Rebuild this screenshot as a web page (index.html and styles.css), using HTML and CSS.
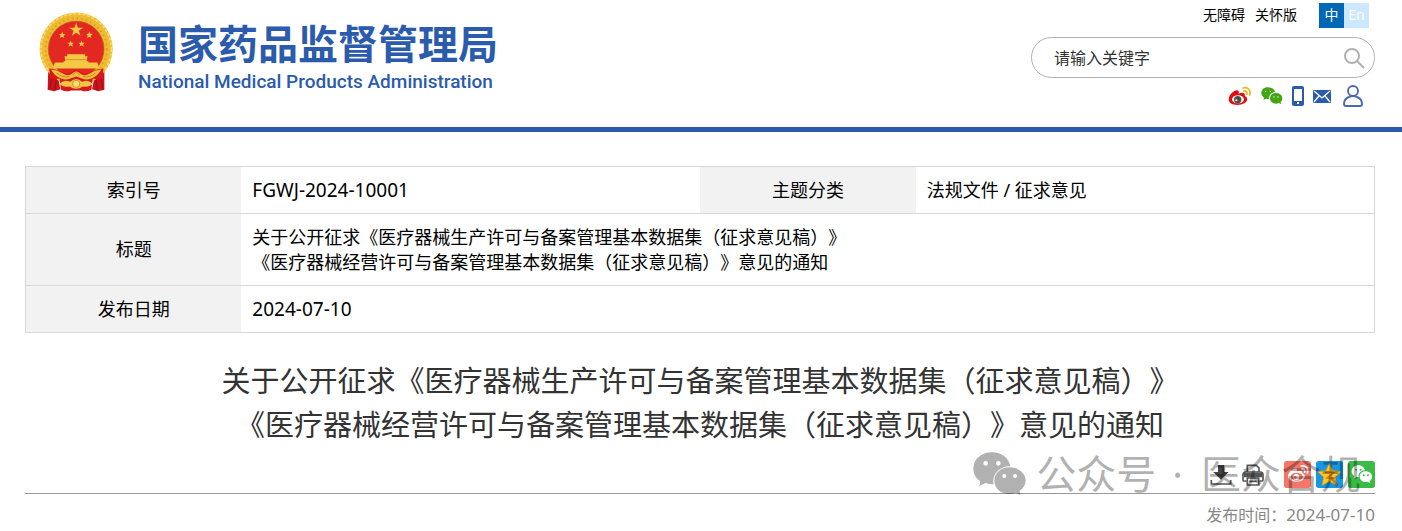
FILE: index.html
```html
<!DOCTYPE html>
<html lang="zh-CN">
<head>
    <meta charset="UTF-8">
    <meta name="viewport" content="width=device-width, initial-scale=1.0">
    <title>国家药品监督管理局</title>
    <link rel="stylesheet" href="styles.css">
</head>
<body>
    <header class="header">
        <a href="#" class="logo">
            <svg class="emblem" viewBox="28 36 226 240" aria-hidden="true">
                <path d="M56 206 L84 222 L92 268 L74 274 L54 270 Z M225 206 L197 222 L188 268 L206 274 L225 270 Z" fill="#c8141b"/>
                <circle cx="140" cy="147" r="110" fill="#eebb32"/>
                <circle cx="140" cy="147" r="106" fill="none" stroke="#f9dc6a" stroke-width="5" stroke-dasharray="9 5"/>
                <circle cx="140" cy="147" r="92" fill="none" stroke="#dfa021" stroke-width="6" stroke-dasharray="5 9"/>
                <circle cx="140" cy="147" r="84" fill="#e32822" stroke="#b9611c" stroke-width="2"/>
                <g fill="#f3c944">
                    <path d="M140 67 L145 83 L161 83 L148 92 L153 107 L140 98 L127 107 L132 92 L119 83 L135 83 Z"/>
                    <path d="M98 95 L101 102 L108 103 L102 107 L104 114 L97 110 L91 114 L93 107 L88 102 L95 102 Z"/>
                    <path d="M180 94 L183 101 L190 102 L184 107 L186 114 L180 110 L173 114 L175 107 L170 102 L177 101 Z"/>
                    <path d="M123 121 L126 128 L133 128 L128 133 L130 140 L123 136 L117 140 L119 133 L114 128 L121 128 Z"/>
                    <path d="M156 121 L159 128 L166 128 L161 133 L163 140 L156 136 L150 140 L152 133 L147 128 L154 128 Z"/>
                    <path d="M112 163 H168 L166 169 H174 L172 184 H177 V188 H204 L210 206 H70 L76 188 H102 V184 H107 L105 169 H114 Z"/>
                </g>
                <path d="M107 179 H172" stroke="#d8702a" stroke-width="2"/>
                <path d="M59 206 Q78 207 96 216 Q118 228 126 217 Q140 203 154 217 Q162 228 184 216 Q202 207 222 206 L221 236 Q206 240 190 236 L186 270 Q168 278 156 272 H124 Q112 278 94 270 L90 236 Q74 240 60 236 Z" fill="#d7191d"/>
                <path d="M64 209 Q82 210 98 220 Q116 231 128 221 Q140 208 152 221 Q164 231 182 220 Q198 210 216 209 Q206 228 186 236 Q170 242 158 236 L140 230 L122 236 Q110 242 94 236 Q74 228 64 209 Z" fill="#f0c03b"/>
                <path d="M82 219 Q98 235 120 230 M198 219 Q182 235 160 230 M129 226 L140 215 L151 226" fill="none" stroke="#c98522" stroke-width="3"/>
                <path d="M90 252 Q104 237 122 246 Q140 228 158 246 Q176 237 190 252 Q180 263 160 260 Q140 274 120 260 Q100 263 90 252 Z" fill="#f2c640"/>
                <circle cx="140" cy="252" r="11" fill="#f9de72" stroke="#d0902a" stroke-width="3"/>
                <path d="M66 238 Q62 254 60 269 M80 238 Q78 256 76 270 M214 238 Q219 254 220 269 M200 238 Q202 256 204 270" fill="none" stroke="#a80e14" stroke-width="4"/>
            </svg>
            <span class="logo-text">
                <span class="logo-cn">国家药品监督管理局</span>
                <span class="logo-en">National Medical Products Administration</span>
            </span>
        </a>

        <div class="header-tools">
            <nav class="top-links">
                <a href="#">无障碍</a>
                <a href="#">关怀版</a>
                <div class="lang">
                    <a href="#" class="lang-item active">中</a>
                    <a href="#" class="lang-item">En</a>
                </div>
            </nav>

            <form class="search">
                <input type="text" class="search-input" placeholder="请输入关键字" aria-label="请输入关键字">
                <button type="button" class="search-btn" aria-label="搜索">
                    <svg width="22" height="22" viewBox="0 0 22 22" fill="none" stroke="#b0b0b0" stroke-width="2">
                        <circle cx="9" cy="9" r="7"/>
                        <path d="M14 14 L21 21"/>
                    </svg>
                </button>
            </form>

            <div class="social">
                <a href="#" aria-label="微博">
                    <svg width="24" height="20" viewBox="0 0 72 60">
                        <path d="M2 40 C2 26 22 9 30 14 C35 17 31 22 32 23 C42 18 53 19 50 30 C60 33 60 45 50 51 C34 61 2 59 2 40 Z" fill="#e10b10"/>
                        <ellipse cx="30" cy="40" rx="18" ry="12" fill="#fff"/>
                        <circle cx="29" cy="41" r="11" fill="#4d4d4d"/>
                        <circle cx="25" cy="43" r="3" fill="#fff"/>
                        <path d="M45 6 C60 2 70 13 65 27 M47 15 C54 13 59 18 57 25" fill="none" stroke="#efb31c" stroke-width="5" stroke-linecap="round"/>
                    </svg>
                </a>
                <a href="#" aria-label="微信">
                    <svg width="22" height="18" viewBox="0 0 66 54">
                        <path d="M20 1 C8 1 1 9 1 18 C1 25 5 29 9 32 L7 39 L15 35 Q19 36 24 36 C23 24 32 16 42 15 C40 6 31 1 20 1 Z" fill="#43a615"/>
                        <path d="M45 18 C34 18 27 25 27 34 C27 43 35 50 45 50 Q50 50 54 48 L60 52 L59 45 C62 42 64 39 64 34 C64 25 56 18 45 18 Z" fill="#43a615"/>
                        <g fill="#fff"><circle cx="14" cy="13" r="2"/><circle cx="28" cy="13" r="2"/><circle cx="39" cy="30" r="2"/><circle cx="51" cy="30" r="2"/></g>
                    </svg>
                </a>
                <a href="#" aria-label="移动端">
                    <svg width="12" height="20" viewBox="0 0 12 20">
                        <rect width="12" height="20" rx="2" fill="#2b5bac"/>
                        <rect x="2" y="3" width="8" height="12" fill="#fff"/>
                        <rect x="5" y="16" width="2" height="2" fill="#fff"/>
                    </svg>
                </a>
                <a href="#" aria-label="邮箱">
                    <svg width="18" height="13" viewBox="0 0 18 13">
                        <rect width="18" height="13" rx="1" fill="#2b5bac"/>
                        <path d="M1 1 L9 8 L17 1 M1 12 L6 6 M17 12 L12 6" fill="none" stroke="#fff" stroke-width="1.3"/>
                    </svg>
                </a>
                <a href="#" class="user" aria-label="用户">
                    <svg width="20" height="22" viewBox="0 0 20 22" fill="none" stroke="#4c68b0" stroke-width="1.9">
                        <circle cx="10" cy="6" r="5"/>
                        <path d="M6 12 C3 13 1 15 1 19 Q1 21 3 21 H17 Q19 21 19 19 C19 15 17 13 14 12 Q10 10 6 12 Z"/>
                    </svg>
                </a>
            </div>
        </div>
    </header>

    <main class="content">
        <table class="info">
            <tr>
                <th scope="row">索引号</th>
                <td class="num">FGWJ-2024-10001</td>
                <th scope="row">主题分类</th>
                <td>法规文件 / 征求意见</td>
            </tr>
            <tr>
                <th scope="row">标题</th>
                <td colspan="3">关于公开征求《医疗器械生产许可与备案管理基本数据集（征求意见稿）》<br>《医疗器械经营许可与备案管理基本数据集（征求意见稿）》意见的通知</td>
            </tr>
            <tr>
                <th scope="row">发布日期</th>
                <td colspan="3" class="num">2024-07-10</td>
            </tr>
        </table>

        <h1 class="title">关于公开征求《医疗器械生产许可与备案管理基本数据集（征求意见稿）》<br>《医疗器械经营许可与备案管理基本数据集（征求意见稿）》意见的通知</h1>

        <div class="share">
            <button type="button" class="share-btn" aria-label="下载">
                <svg width="22" height="22" viewBox="0 0 66 66">
                    <path d="M24 3 H43 V24 H56 L33 47 L10 24 H24 Z" fill="#444"/>
                    <path d="M4 48 V60 H62 V48" fill="none" stroke="#555" stroke-width="5"/>
                </svg>
            </button>
            <button type="button" class="share-btn" aria-label="打印">
                <svg width="22" height="22" viewBox="0 0 66 66" fill="none" stroke="#555" stroke-width="5">
                    <path d="M16 24 V4 H43 L51 12 V24"/>
                    <path d="M14 51 H6 Q3 51 3 47 V32 Q3 24 11 24 H55 Q63 24 63 32 V47 Q63 51 60 51 H52"/>
                    <path d="M8 29 H58 V37 H8 Z" fill="#555"/>
                    <path d="M16 42 H50 V63 H16 Z M22 52 H44"/>
                </svg>
            </button>
            <button type="button" class="share-btn app" aria-label="分享到微博">
                <svg width="27" height="27" viewBox="0 0 81 81">
                    <rect width="81" height="81" rx="8" fill="#f57668"/>
                    <path d="M12 45 C12 34 29 19 37 23 C41 25 39 30 39 31 C49 27 57 29 55 37 C65 41 65 51 56 57 C42 66 12 63 12 45 Z" fill="#fff"/>
                    <ellipse cx="38" cy="47" rx="18" ry="12" fill="#f57668"/>
                    <circle cx="37" cy="48" r="9" fill="#fff"/>
                    <circle cx="34" cy="49" r="4" fill="#f57668"/>
                    <path d="M52 15 C66 12 75 24 70 36 M53 24 C60 23 64 28 62 34" fill="none" stroke="#fff" stroke-width="5" stroke-linecap="round"/>
                </svg>
            </button>
            <button type="button" class="share-btn app" aria-label="分享到QQ空间">
                <svg width="27" height="27" viewBox="0 0 81 81">
                    <rect width="81" height="81" rx="8" fill="#1796e4"/>
                    <path d="M40 7 L50 29 L75 32 L57 48 L62 73 L40 61 L18 73 L23 48 L5 32 L30 29 Z" fill="#ffc91f" stroke="#f09a13" stroke-width="2"/>
                    <path d="M27 34 Q41 32 53 35 L33 51 Q46 54 59 50" fill="none" stroke="#e07a12" stroke-width="5"/>
                </svg>
            </button>
            <button type="button" class="share-btn app" aria-label="分享到微信">
                <svg width="27" height="27" viewBox="0 0 81 81">
                    <rect width="81" height="81" rx="8" fill="#3bbb43"/>
                    <path d="M31 13 C19 13 11 21 11 31 C11 37 14 42 19 45 L17 53 L26 48 H32 C30 36 39 29 51 28 C49 19 41 13 31 13 Z" fill="#fff"/>
                    <path d="M53 31 C42 31 35 38 35 47 C35 56 43 63 53 63 L59 62 L67 67 L65 60 C69 57 72 53 72 47 C72 38 64 31 53 31 Z" fill="#fff"/>
                    <g fill="#3bbb43"><circle cx="24" cy="26" r="3"/><circle cx="38" cy="26" r="3"/><circle cx="47" cy="43" r="3"/><circle cx="60" cy="43" r="3"/></g>
                </svg>
            </button>

            <div class="watermark">
                <svg width="53" height="44" viewBox="0 0 159 132">
                    <path d="M57 1 C25 1 1 22 1 50 C1 66 9 79 22 88 L19 102 L37 93 Q48 97 62 97 C56 68 78 44 112 42 C107 18 85 1 57 1 Z M38 27 A7 7 0 1 1 38 41 A7 7 0 1 1 38 27 Z M76 27 A7 7 0 1 1 76 41 A7 7 0 1 1 76 27 Z" fill-rule="evenodd"/>
                    <path d="M110 46 C83 46 64 64 64 86 C64 109 84 126 110 126 Q120 126 129 122 L142 129 L140 116 C151 108 158 98 158 86 C158 64 137 46 110 46 Z M94 66 A6 6 0 1 1 94 78 A6 6 0 1 1 94 66 Z M126 66 A6 6 0 1 1 126 78 A6 6 0 1 1 126 66 Z" fill-rule="evenodd"/>
                </svg>
                <span>公众号</span>
                <span class="dot">·</span>
                <span>医众合规</span>
            </div>
        </div>

        <p class="time">发布时间：<span class="time-date">2024-07-10</span></p>
    </main>
</body>
</html>
```

FILE: styles.css
```css
* {
    margin: 0;
    padding: 0;
    box-sizing: border-box;
}

body {
    font-family: "Noto Sans", "Noto Sans CJK SC", sans-serif;
    background: #fff;
    color: #000;
    text-spacing-trim: space-all;
}

a {
    color: inherit;
    text-decoration: none;
}

button {
    border: none;
    background: none;
    cursor: pointer;
}

svg {
    display: block;
}

/* header */
.header {
    display: flex;
    justify-content: space-between;
    align-items: flex-start;
    padding: 3px 27px 20px 39px;
    border-bottom: 5px solid #2b5bac;
}

.logo {
    display: flex;
    gap: 24px;
    padding-top: 9px;
    color: #2b5bac;
}

.emblem {
    width: 75px;
    height: 80px;
}

.logo-text {
    display: flex;
    flex-direction: column;
    padding-top: 8px;
    white-space: nowrap;
}

.logo-cn {
    font-size: 40px;
    font-weight: 700;
    line-height: 48px;
}

.logo-en {
    font-family: Roboto, sans-serif;
    font-size: 19px;
    font-weight: 500;
    line-height: 28px;
}

.header-tools {
    width: 344px;
}

.top-links {
    display: flex;
    justify-content: flex-end;
    gap: 10px;
    padding-right: 6px;
    font-size: 14px;
    line-height: 23px;
}

.lang {
    display: flex;
    margin-left: 12px;
}

.lang-item {
    width: 25px;
    height: 25px;
    background: #cce8ff;
    color: #fff;
    text-align: center;
}

.lang-item.active {
    background: #0068b7;
}

.search {
    display: flex;
    align-items: center;
    height: 41px;
    margin-top: 9px;
    padding: 0 9px 0 22px;
    border: 1px solid #b0b0b0;
    border-radius: 21px;
}

.search-input {
    flex: 1;
    min-width: 0;
    border: none;
    outline: none;
    background: none;
    font-family: inherit;
    font-size: 16px;
    color: #333;
}

.search-input::placeholder {
    color: #333;
    opacity: 1;
}

.social {
    display: flex;
    justify-content: flex-end;
    align-items: center;
    gap: 9px;
    margin-top: 7px;
    padding-right: 12px;
}

.user {
    margin-left: 3px;
}

/* content */
.content {
    padding: 34px 27px 0 25px;
}

.info {
    width: 100%;
    table-layout: fixed;
    border-collapse: collapse;
    border: 1px solid #d7d7d7;
    font-size: 18px;
    line-height: 25px;
}

.info tr {
    border-bottom: 1px solid #d7d7d7;
}

.info th {
    width: 16%;
    background: #f2f2f2;
    font-weight: 400;
    text-align: center;
}

.info td {
    width: 34%;
    padding: 11px 11px 10px;
}

.info .num {
    font-size: 19px;
}

.title {
    margin-top: 26px;
    font-size: 29px;
    font-weight: 400;
    line-height: 44px;
    text-align: center;
    color: #333;
}

.share {
    position: relative;
    display: flex;
    justify-content: flex-end;
    align-items: center;
    gap: 5px;
    margin-top: 14px;
    padding-bottom: 5px;
    border-bottom: 1px solid #999;
}

.share-btn {
    margin-right: 5px;
}

.share-btn.app {
    margin-right: 0;
}

.share-btn.app:nth-of-type(3) {
    margin-left: 10px;
}

/* lies over the share bar */
.watermark {
    position: absolute;
    right: 14px;
    bottom: -5px;
    display: flex;
    align-items: center;
    gap: 10px;
    font-size: 40px;
    line-height: 48px;
    white-space: nowrap;
    color: #000;
    fill: #000;
    opacity: 0.3;
    pointer-events: none;
}

.dot {
    padding: 0 8px 0 6px;
}

.time {
    margin-top: 9px;
    font-size: 16px;
    line-height: 24px;
    text-align: right;
    color: #888;
}

.time-date {
    font-size: 17px;
}
```
